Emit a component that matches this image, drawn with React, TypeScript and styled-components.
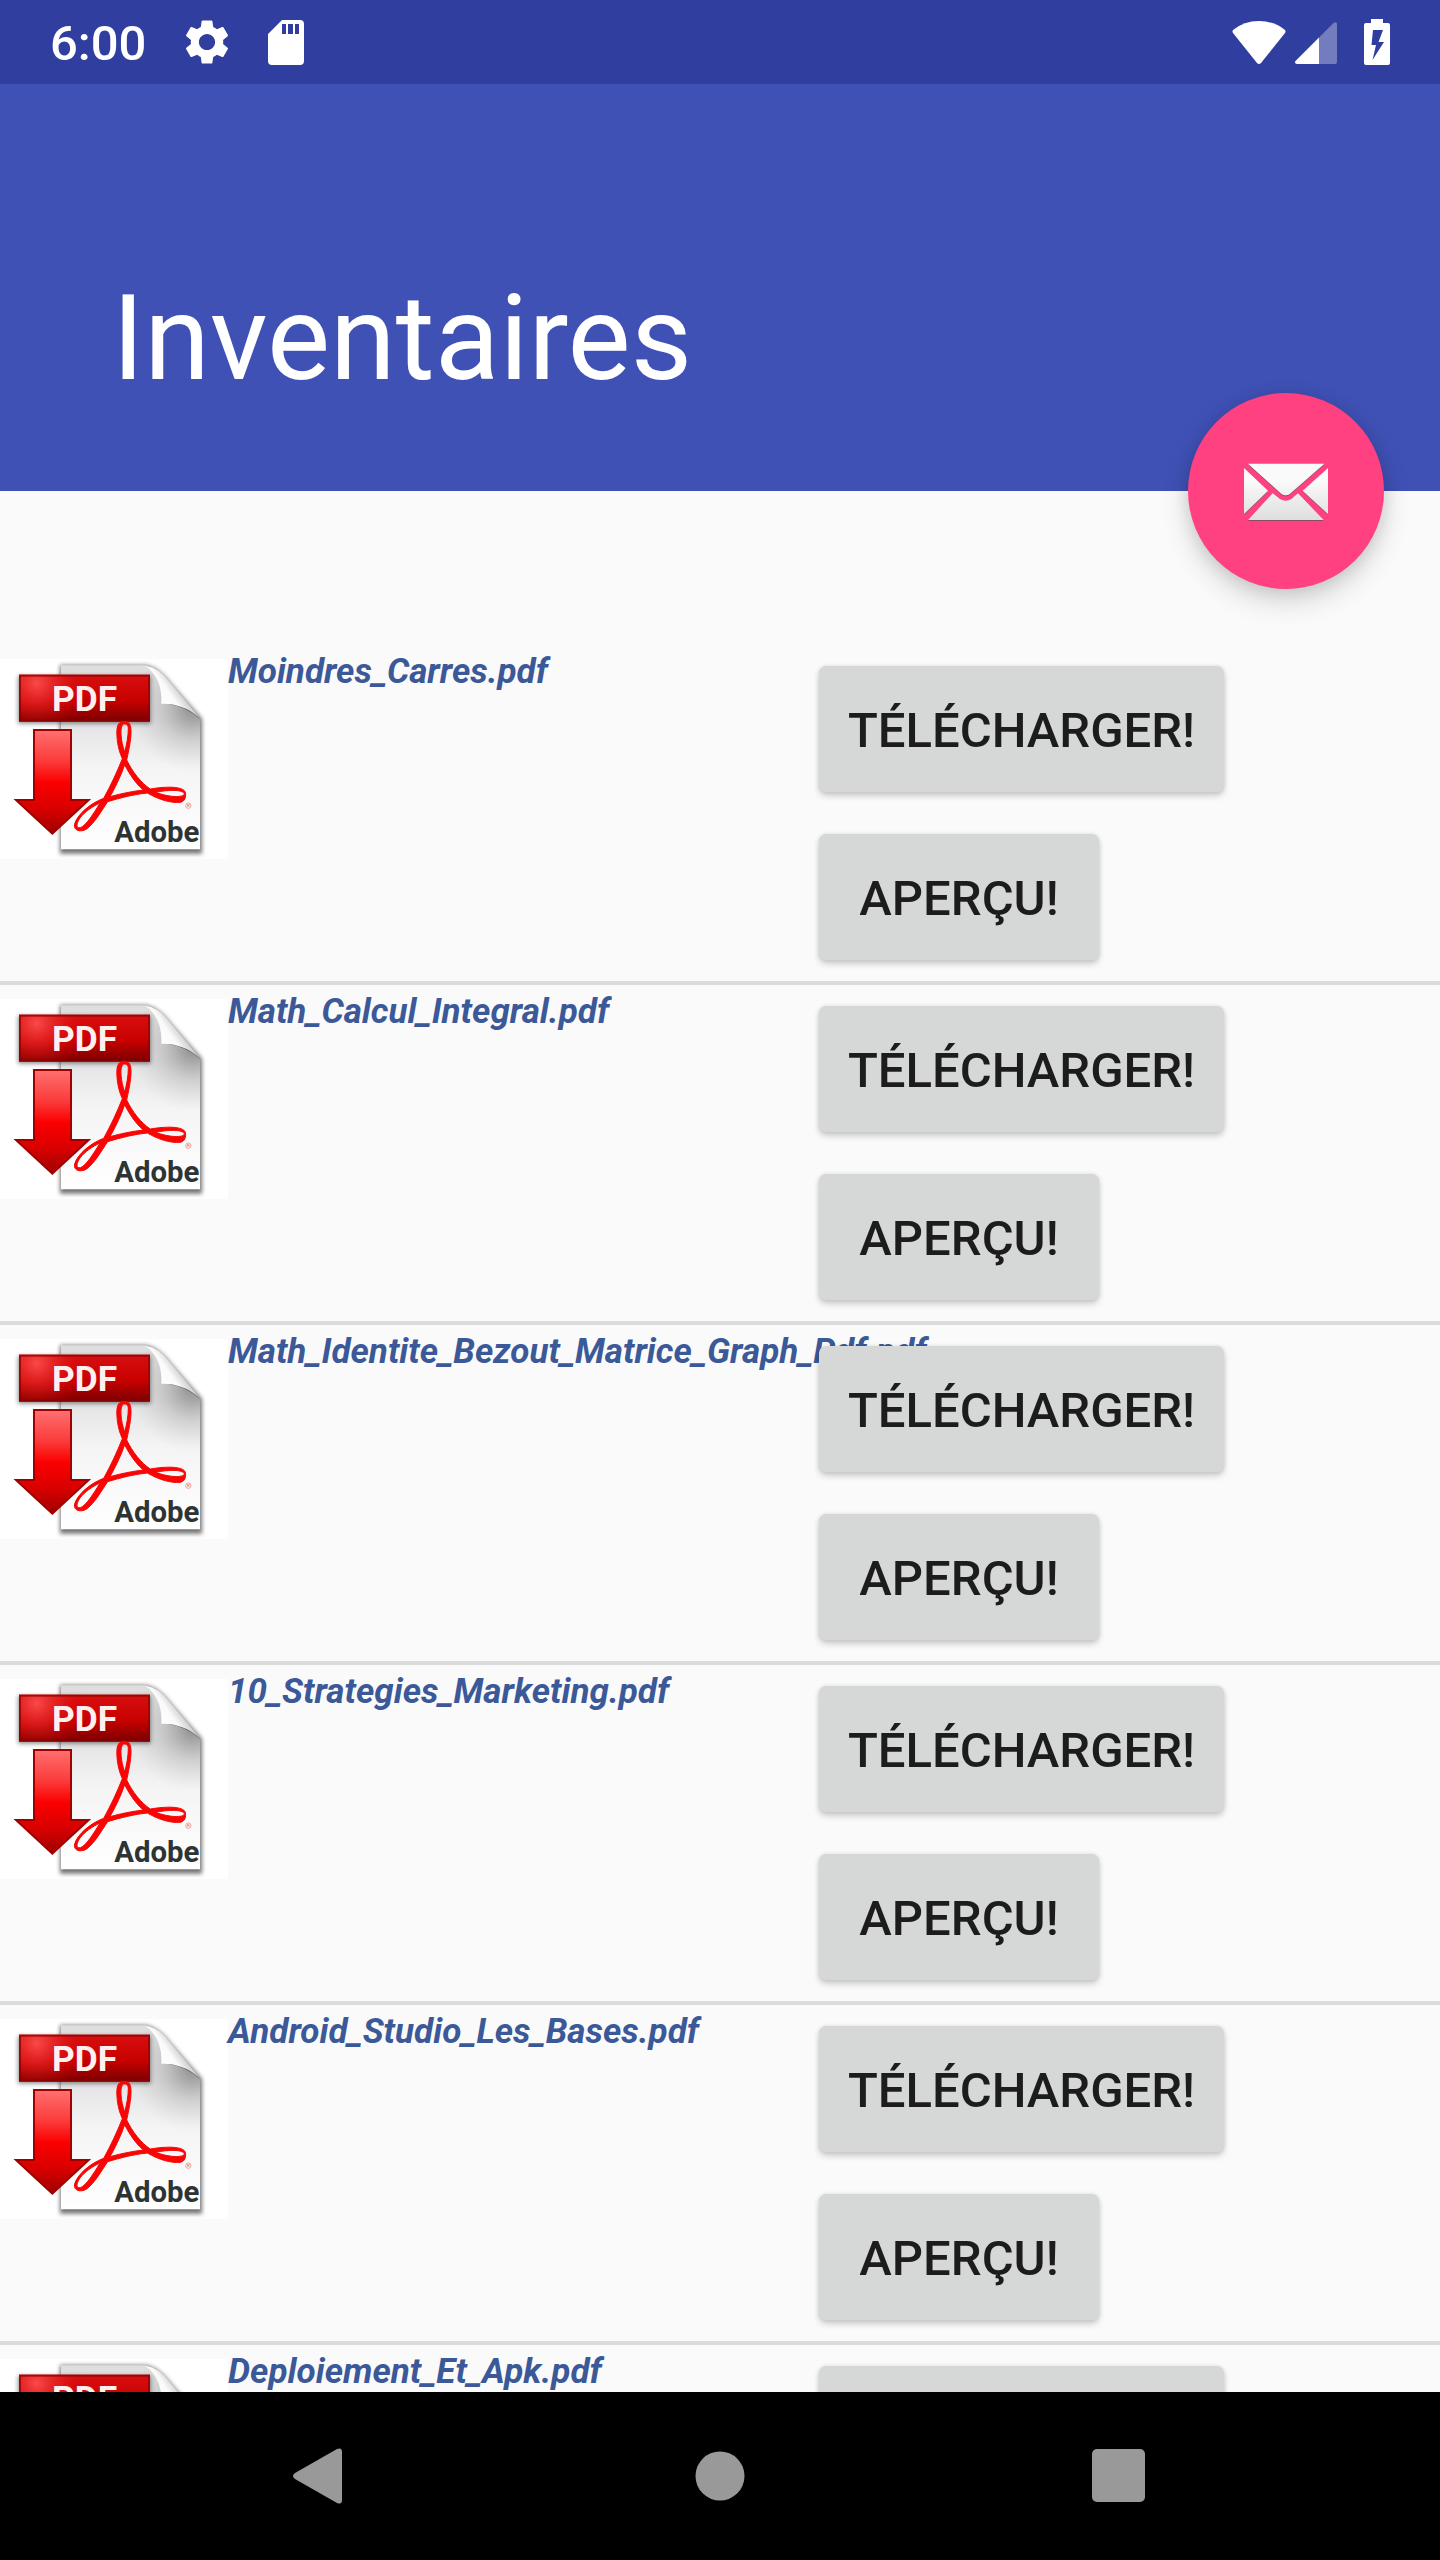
import React from "react";
import styled, { createGlobalStyle } from "styled-components";
import { MdSettings } from "react-icons/md";

const GlobalStyle = createGlobalStyle`
  *, *::before, *::after { box-sizing: border-box; }
  body { margin: 0; background: #fafafa; font-family: Roboto, "Noto Sans", sans-serif; }
`;

const Screen = styled.div`
  display: flex;
  flex-direction: column;
  height: 100vh;
  overflow: hidden;
`;

const StatusBar = styled.div`
  display: flex;
  flex: none;
  align-items: center;
  justify-content: space-between;
  height: 84px;
  padding: 0 50px;
  background: #303f9f;
  color: #fff;
`;

const StatusGroup = styled.div<{ $gap: number }>`
  display: flex;
  align-items: center;
  gap: ${(p) => p.$gap}px;
`;

const Clock = styled.time`
  padding-top: 4px;
  font-size: 49px;
  font-weight: 500;
  line-height: 58px;
`;

const Header = styled.header`
  position: relative;
  display: flex;
  flex: none;
  align-items: flex-end;
  height: 407px;
  padding: 0 112px 82px;
  background: #3f51b5;
`;

const Title = styled.h1`
  margin: 0;
  color: #fff;
  font-size: 119px;
  font-weight: 400;
  line-height: 140px;
`;

const MailButton = styled.button`
  position: absolute;
  right: 56px;
  bottom: -98px;
  display: flex;
  align-items: center;
  justify-content: center;
  width: 196px;
  height: 196px;
  padding: 0;
  border: 0;
  border-radius: 50%;
  background: #ff4081;
  box-shadow: 0 12px 28px rgba(0, 0, 0, 0.16), 0 2px 16px rgba(0, 0, 0, 0.1);
`;

const FileList = styled.ul`
  flex: 1;
  min-height: 0;
  margin: 0;
  padding: 154px 0 0;
  overflow: hidden;
  list-style: none;
`;

const FileRow = styled.li`
  display: grid;
  grid-template-columns: 228px 591px 1fr;
  align-items: start;
  border-bottom: 4px solid #dbdbdb;
`;

const Thumb = styled.div`
  display: flex;
  padding-top: 14px;
`;

const FileName = styled.span`
  padding-top: 6px;
  color: #3b5998;
  font-size: 35px;
  font-style: italic;
  font-weight: 700;
  line-height: 42px;
  white-space: nowrap;
`;

const Actions = styled.div`
  display: flex;
  flex-direction: column;
  align-items: flex-start;
  gap: 42px;
  padding: 21px 0;
`;

const ActionButton = styled.button`
  min-width: 280px;
  height: 126px;
  padding: 4px 29px 0;
  border: 0;
  border-radius: 7px;
  background: #d6d7d7;
  box-shadow: 0 4px 6px rgba(0, 0, 0, 0.18), 0 0 4px rgba(0, 0, 0, 0.1);
  color: #1c1c1c;
  font-family: inherit;
  font-size: 49px;
  font-weight: 500;
  line-height: 58px;
`;

const NavBar = styled.nav`
  display: flex;
  flex: none;
  align-items: center;
  justify-content: center;
  gap: 231px;
  height: 168px;
  background: #000;
`;

const NavButton = styled.button`
  display: flex;
  align-items: center;
  justify-content: center;
  width: 168px;
  height: 168px;
  padding: 0;
  border: 0;
  background: none;
`;

const SdCardIcon = () => (
  <svg width="36" height="45" viewBox="0 0 36 45" aria-hidden="true">
    <path
      fill="#fff"
      fillRule="evenodd"
      d="M14 0H32Q36 0 36 4V41Q36 45 32 45H4Q0 45 0 41V14ZM14 4V14H18V4ZM20 4V14H25V4ZM27 4V14H31V4Z"
    />
  </svg>
);

const WifiIcon = () => (
  <svg width="54" height="43" viewBox="0 0 54 43" aria-hidden="true">
    <path fill="#fff" d="M1 9Q12 0 27 0T53 9Q54 10.500 53 12L29 42Q27 44 25 42L1 12Q0 10.500 1 9Z" />
  </svg>
);

const SignalIcon = () => (
  <svg width="42" height="44" viewBox="0 -2 42 44" aria-hidden="true">
    <path fill="#fff" fillOpacity="0.32" d="M24 15.500L38.500 1Q42 -1 42 2V40Q42 42 40 42H24Z" />
    <path fill="#fff" d="M24 15.500V42H2Q-1.500 41 1 38.500Z" />
  </svg>
);

const BatteryIcon = () => (
  <svg width="44" height="46" viewBox="-18 0 44 46" aria-hidden="true">
    <path
      fill="#fff"
      fillRule="evenodd"
      d="M7 0H19V4H24Q26 4 26 6V44Q26 46 24 46H2Q0 46 0 44V6Q0 4 2 4H7ZM9 11L7.500 26H12L8.500 41L20 23H14.500L19 11Z"
    />
  </svg>
);

const MailIcon = () => (
  <svg width="84" height="60" viewBox="0 -5 252 180" aria-hidden="true">
    <defs>
      <linearGradient id="paper" x1="0" y1="0" x2="0" y2="180" gradientUnits="userSpaceOnUse">
        <stop offset="0.3" stopColor="#fafafa" />
        <stop offset="1" stopColor="#dcdcdc" />
      </linearGradient>
      <filter id="flapShade" x="-5%" y="-5%" width="110%" height="115%">
        <feDropShadow dx="0" dy="3" stdDeviation="2" floodColor="#555" floodOpacity="0.7" />
      </filter>
    </defs>
    <g fill="url(#paper)" filter="url(#flapShade)">
      <path d="M12 3H241L137 94Q125 102 113 94Z" />
      <path d="M0 16L72 84L0 154Z" />
      <path d="M252 16L176 84L252 154Z" />
      <path d="M86 92L108 109Q125 120 142 109L162 92L239 172H12Z" />
    </g>
  </svg>
);

const PdfDownloadImage = () => (
  <svg width="228" height="200" viewBox="0 57 684 600" role="img" aria-label="PDF">
    <defs>
      <linearGradient id="sheet" x1="0" y1="75" x2="0" y2="630" gradientUnits="userSpaceOnUse">
        <stop offset="0" stopColor="#dedede" />
        <stop offset="0.3" stopColor="#e3e3e5" />
        <stop offset="0.55" stopColor="#f4f4f4" />
        <stop offset="1" stopColor="#fff" />
      </linearGradient>
      <radialGradient id="sheetShade" cx="580" cy="205" r="190" gradientUnits="userSpaceOnUse">
        <stop offset="0" stopColor="#666" stopOpacity="0.7" />
        <stop offset="0.5" stopColor="#888" stopOpacity="0.28" />
        <stop offset="1" stopColor="#aaa" stopOpacity="0" />
      </radialGradient>
      <linearGradient id="curl" x1="470" y1="180" x2="550" y2="125" gradientUnits="userSpaceOnUse">
        <stop offset="0" stopColor="#fff" />
        <stop offset="0.45" stopColor="#fafafa" />
        <stop offset="1" stopColor="#aaa" />
      </linearGradient>
      <linearGradient id="label" x1="0" y1="105" x2="0" y2="245" gradientUnits="userSpaceOnUse">
        <stop offset="0" stopColor="#d80f10" />
        <stop offset="0.55" stopColor="#c80000" />
        <stop offset="1" stopColor="#790000" />
      </linearGradient>
      <radialGradient id="labelGlow" cx="110" cy="130" r="150" gradientUnits="userSpaceOnUse">
        <stop offset="0" stopColor="#ff5555" stopOpacity="0.85" />
        <stop offset="1" stopColor="#e00000" stopOpacity="0" />
      </radialGradient>
      <linearGradient id="arrow" x1="0" y1="270" x2="0" y2="585" gradientUnits="userSpaceOnUse">
        <stop offset="0" stopColor="#ff7070" />
        <stop offset="0.3" stopColor="#fb3a3a" />
        <stop offset="0.5" stopColor="#fb0000" />
        <stop offset="0.75" stopColor="#d80000" />
        <stop offset="1" stopColor="#9c0000" />
      </linearGradient>
      <filter id="blur"><feGaussianBlur stdDeviation="6" /></filter>
    </defs>
    <rect y="57" width="684" height="600" fill="#fff" />
    <path d="M180 76H440Q480 86 512 130L606 236V641H180Z" fill="#444" opacity="0.75" filter="url(#blur)" />
    <path d="M183 76H436Q478 88 490 190Q560 200 600 240V628H183Z" fill="url(#sheet)" />
    <path d="M183 76H436Q478 88 490 190Q560 200 600 240V628H183Z" fill="url(#sheetShade)" />
    <path d="M436 77Q478 82 512 130L598 232Q550 190 484 191Q488 115 436 77Z" fill="url(#curl)" />
    <rect x="54" y="108" width="398" height="143" fill="#222" opacity="0.5" filter="url(#blur)" />
    <rect x="57" y="104" width="393" height="141" fill="url(#label)" />
    <rect x="57" y="104" width="393" height="141" fill="url(#labelGlow)" />
    <rect x="60" y="107" width="387" height="135" fill="none" stroke="#8c0000" strokeWidth="6" opacity="0.75" />
    <text x="156" y="213" fill="#fff0f0" fontFamily="Roboto, sans-serif" fontSize="106" fontWeight="700">
      PDF
    </text>
    <path d="M102 270H213V480H266L157 581L48 480H102Z" fill="url(#arrow)" stroke="#a00000" strokeWidth="6" />
    <path
      fill="#f90505"
      stroke="#f90505"
      strokeWidth="3"
      fillRule="evenodd"
      d="M372 244C352 244 349 264 351 290C353 320 360 340 367 356C353 392 333 435 311 475C270 490 231 525 224 552C219 572 243 579 261 566C285 548 303 514 323 485C362 473 406 462 442 459C476 479 514 490 540 487C555 485 559 470 556 457C550 438 497 439 451 447C423 429 397 395 380 360C389 319 399 270 389 252C385 246 379 244 372 244ZM371 252C377 251 384 253 385 264C385 288 380 314 374 336C363 306 357 258 371 252ZM374 374C390 406 409 432 430 450C396 454 362 461 330 470C348 438 364 404 374 374ZM300 489C280 522 258 557 241 563C227 566 229 548 241 533C254 516 276 500 300 489ZM467 457C504 449 548 448 553 461C552 474 506 472 467 457Z"
    />
    <circle cx="565" cy="497" r="8" fill="none" stroke="#e77" strokeWidth="2" />
    <text x="561" y="502" fill="#d55" fontFamily="Roboto, sans-serif" fontSize="13">R</text>
    <text x="343" y="606" fill="#2d3434" fontFamily="Roboto, sans-serif" fontSize="88" fontWeight="700">
      Adobe
    </text>
  </svg>
);

const files = [
  "Moindres_Carres.pdf",
  "Math_Calcul_Integral.pdf",
  "Math_Identite_Bezout_Matrice_Graph_Pdf.pdf",
  "10_Strategies_Marketing.pdf",
  "Android_Studio_Les_Bases.pdf",
  "Deploiement_Et_Apk.pdf",
];

export default function App() {
  return (
    <Screen>
      <GlobalStyle />
      <StatusBar>
        <StatusGroup $gap={34}>
          <Clock>6:00</Clock>
          <MdSettings size={54} />
          <SdCardIcon />
        </StatusGroup>
        <StatusGroup $gap={9}>
          <WifiIcon />
          <SignalIcon />
          <BatteryIcon />
        </StatusGroup>
      </StatusBar>
      <Header>
        <Title>Inventaires</Title>
        <MailButton type="button" aria-label="Envoyer un message">
          <MailIcon />
        </MailButton>
      </Header>
      <FileList>
        {files.map((name) => (
          <FileRow key={name}>
            <Thumb>
              <PdfDownloadImage />
            </Thumb>
            <FileName>{name}</FileName>
            <Actions>
              <ActionButton type="button">TÉLÉCHARGER!</ActionButton>
              <ActionButton type="button">APERÇU!</ActionButton>
            </Actions>
          </FileRow>
        ))}
      </FileList>
      <NavBar>
        <NavButton type="button" aria-label="Retour">
          <svg width="56" height="56" viewBox="0 0 56 56" aria-hidden="true">
            <path fill="#999" d="M2 25L44 1Q49 -1 49 4V52Q49 57 44 55L2 31Q-2 28 2 25Z" />
          </svg>
        </NavButton>
        <NavButton type="button" aria-label="Accueil">
          <svg width="50" height="50" viewBox="0 0 50 50" aria-hidden="true">
            <circle cx="25" cy="25" r="24.500" fill="#999" />
          </svg>
        </NavButton>
        <NavButton type="button" aria-label="Applications récentes">
          <svg width="54" height="54" viewBox="0 0 54 54" aria-hidden="true">
            <rect width="53" height="53" rx="5" fill="#999" />
          </svg>
        </NavButton>
      </NavBar>
    </Screen>
  );
}
